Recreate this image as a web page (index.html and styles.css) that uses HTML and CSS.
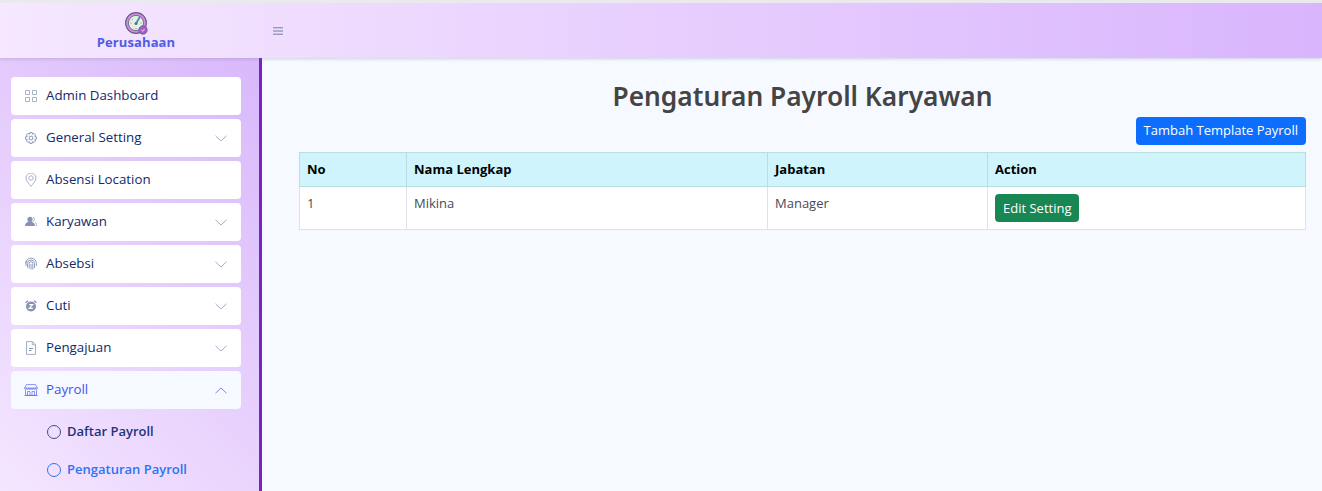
FILE: index.html
```html
<!DOCTYPE html>
<html lang="id">
<head>
<meta charset="utf-8">
<title>Pengaturan Payroll Karyawan</title>
<link rel="stylesheet" href="styles.css">
</head>
<body>
<header class="topbar">
  <div class="brand">
    <svg class="logo" viewBox="0 0 24 24" width="24" height="24">
      <circle cx="12" cy="12" r="10.4" fill="#d58ae0" stroke="#5c5f80" stroke-width="1.1"/>
      <circle cx="12" cy="12" r="7.6" fill="#e4efe6" stroke="#5c5f80" stroke-width=".8"/>
      <path d="M12 12.5 15.5 6.5" stroke="#3f8fb0" stroke-width="1.8" stroke-linecap="round"/>
      <circle cx="12" cy="12.5" r="1.5" fill="#5c6f80"/>
      <path d="M6.5 12h1M16.500 12h1M12 17v1M8 8l.7.7" stroke="#7a8a80" stroke-width="1"/>
      <circle cx="19" cy="19" r="4.200" fill="#a55fc9" stroke="#5c5f80" stroke-width=".8"/>
      <path d="M17.300 19l1.300 1.300 2-2.300" stroke="#f4e8fa" stroke-width=".9" fill="none"/>
    </svg>
    <span class="brand-name">Perusahaan</span>
  </div>
  <button class="burger" aria-label="Menu">
    <svg viewBox="0 0 10 8" width="10" height="8"><path d="M0 .8h10M0 4h10M0 7.200h10" stroke="#5f6f9f" stroke-width=".9"/></svg>
  </button>
</header>
<div class="shell">
  <aside class="sidebar">
    <a class="item">
      <svg class="ico" viewBox="0 0 12 12"><path d="M.5.500h4v4h-4zM7.500.500h4v4h-4zM.5 7.500h4v4h-4zM7.500 7.500h4v4h-4z" fill="none" stroke="#a9b3cc"/></svg>
      <span class="label">Admin Dashboard</span>
    </a>
    <a class="item">
      <svg class="ico" viewBox="0 0 12 12"><path d="M4.900.6h2.200l.4 1.600 1.500-.8 1.500 1.500-.8 1.500 1.700.5v2.200l-1.700.4.800 1.500-1.500 1.500-1.500-.8-.4 1.700H4.900l-.4-1.700-1.500.8-1.500-1.500.8-1.500L.6 7.100V4.900l1.700-.5-.8-1.500L3 1.400l1.500.8z" fill="none" stroke="#8693b5" stroke-width="1"/><circle cx="6" cy="6" r="1.900" fill="none" stroke="#8693b5"/></svg>
      <span class="label">General Setting</span>
      <svg class="chev" viewBox="0 0 12 7"><path d="M.5.800 6 6l5.500-5.200" fill="none" stroke="#a3aec9"/></svg>
    </a>
    <a class="item">
      <svg class="ico" viewBox="0 0 12 14"><path d="M6 13.400C4 10.500 1 7.800 1 5a5 5 0 0 1 10 0C11 7.800 8 10.500 6 13.400z" fill="none" stroke="#a9b3cc"/><circle cx="6" cy="5" r="2.200" fill="none" stroke="#a9b3cc"/></svg>
      <span class="label">Absensi Location</span>
    </a>
    <a class="item">
      <svg class="ico" viewBox="0 0 12 12"><circle cx="5" cy="3.400" r="2.600" fill="#8693b5"/><path d="M0 10c0-3 2.200-4.500 5-4.500S10 7 10 10z" fill="#8693b5"/><path d="M8 1.200a2.300 2.300 0 0 1 0 4.200M10 6c1 .7 1.500 2 1.500 4" fill="none" stroke="#a9b3cc"/></svg>
      <span class="label">Karyawan</span>
      <svg class="chev" viewBox="0 0 12 7"><path d="M.5.800 6 6l5.500-5.200" fill="none" stroke="#a3aec9"/></svg>
    </a>
    <a class="item">
      <svg class="ico" viewBox="0 0 12 12"><path d="M.6 5.500a5.400 5.400 0 0 1 10.800 0V8M1 8V5.500a5 5 0 0 1 1-3M2.500 9.500V5.500a3.500 3.500 0 0 1 7 0V10M4.200 10.500V5.500a1.800 1.800 0 0 1 3.600 0V11.500M6 6v5.500" fill="none" stroke="#8693b5" stroke-width=".9"/></svg>
      <span class="label">Absebsi</span>
      <svg class="chev" viewBox="0 0 12 7"><path d="M.5.800 6 6l5.500-5.200" fill="none" stroke="#a3aec9"/></svg>
    </a>
    <a class="item">
      <svg class="ico" viewBox="0 0 12 12"><circle cx="6" cy="6.500" r="5" fill="#8693b5"/><path d="M.6 2.800 3 .8M11.400 2.800 9 .8" stroke="#8693b5" stroke-width="1.400"/><path d="M4.200 4.600h3.600L4.200 8.400h3.600" fill="none" stroke="#fff" stroke-width="1.100"/></svg>
      <span class="label">Cuti</span>
      <svg class="chev" viewBox="0 0 12 7"><path d="M.5.800 6 6l5.500-5.200" fill="none" stroke="#a3aec9"/></svg>
    </a>
    <a class="item">
      <svg class="ico" viewBox="0 0 12 14"><path d="M1.500.6h6L10.500 3.600v9.800h-9zM7.300.6v3.200h3.200" fill="none" stroke="#a3aec9"/><path d="M4 7.500h4M4 9.500h2.500" stroke="#8693b5"/></svg>
      <span class="label">Pengajuan</span>
      <svg class="chev" viewBox="0 0 12 7"><path d="M.5.800 6 6l5.500-5.200" fill="none" stroke="#a3aec9"/></svg>
    </a>
    <a class="item item-open">
      <svg class="ico ico-wide" viewBox="0 0 14 12"><path d="M2.500.6h9L13.400 4H.6zM.6 4c0 2 2.100 2 2.100 0 0 2 2.200 2 2.200 0 0 2 2.100 2 2.100 0 0 2 2.200 2 2.200 0 0 2 2.100 2 2.100 0 0 2 2.100 2 2.100 0M1.500 6v5.400h11V6M.5 11.500h13M3.500 11V7.500h2.500V11M8 11V7.500h2.500V11" fill="none" stroke="#5a67f0" stroke-width=".7"/></svg>
      <span class="label">Payroll</span>
      <svg class="chev" viewBox="0 0 12 7"><path d="M.5 6.200 6 1l5.500 5.200" fill="none" stroke="#7a86ef"/></svg>
    </a>
    <a class="sub"><span class="dot"></span><span class="sub-label">Daftar Payroll</span></a>
    <a class="sub sub-active"><span class="dot"></span><span class="sub-label">Pengaturan Payroll</span></a>
  </aside>
  <main class="content">
    <h1 class="title">Pengaturan Payroll Karyawan</h1>
    <div class="actions"><button class="btn btn-primary"><span class="btn-text">Tambah Template Payroll</span></button></div>
    <table class="grid">
      <thead>
        <tr><th class="c-no">No</th><th class="c-name">Nama Lengkap</th><th class="c-job">Jabatan</th><th>Action</th></tr>
      </thead>
      <tbody>
        <tr><td>1</td><td>Mikina</td><td>Manager</td><td><button class="btn btn-success">Edit Setting</button></td></tr>
      </tbody>
    </table>
  </main>
</div>
</body>
</html>
```
FILE: styles.css
```css
* { box-sizing: border-box; }
html, body { margin: 0; height: 100%; overflow: hidden; }
body {
  font-family: "Open Sans", "Noto Sans", sans-serif;
  font-size: 13px;
  background: #f6f9ff;
  border-top: 3px solid #e9e9ee;
}
.topbar {
  height: 55px;
  display: flex;
  align-items: center;
  background: linear-gradient(90deg, #f6e8ff 0%, #d9b5fd 100%);
  box-shadow: 0 1px 3px rgba(120, 110, 150, .3);
  position: relative;
}
.brand {
  width: 272px;
  margin-right: 1px;
  display: flex;
  flex-direction: column;
  align-items: center;
}
.logo { display: block; }
.brand-name {
  font-size: 13px;
  font-weight: 700;
  line-height: 15px;
  letter-spacing: .1px;
  color: #4f5ce6;
}
.burger {
  border: 0;
  padding: 0;
  background: none;
  display: flex;
}
.shell { display: flex; height: 433px; }
.sidebar {
  width: 262px;
  flex: none;
  padding: 19px 18px 0 11px;
  border-right: 3px solid #7a22c4;
  background: linear-gradient(45deg, #f4e6ff 0%, #d9b8fb 100%);
  display: flex;
  flex-direction: column;
  gap: 4px;
  overflow: hidden;
}
.item {
  height: 38px;
  flex: none;
  display: flex;
  align-items: center;
  padding: 0 14px 2px 13px;
  background: #fff;
  border-radius: 4px;
  color: #12296b;
  font-size: 13.300px;
  font-weight: 520;
}
.ico { width: 12px; height: 14px; margin-right: 9px; flex: none; margin-left: 1px; margin-top: 2px; }
.ico-wide { width: 14px; margin-left: 0; margin-right: 8px; }
.label { flex: 1; }
.chev { width: 12px; height: 7px; margin-top: 2px; }
.item-open { background: #f6f9ff; color: #4154f1; }
.sub {
  height: 34px;
  flex: none;
  display: flex;
  align-items: center;
  padding-left: 36px;
  gap: 6px;
  color: #1f3478;
  font-size: 13px;
  font-weight: 600;
}
.sub-label { position: relative; top: -1px; }
.sub:nth-of-type(9) { margin-top: 2px; }
.dot {
  width: 14px;
  height: 14px;
  border: 1.300px solid #3e4f8a;
  border-radius: 50%;
}
.sub-active { color: #2a73f5; }
.sub-active .dot { border-color: #2a73f5; }
.content {
  flex: 1;
  padding: 19px 16px 0 37px;
  min-width: 0;
}
.title {
  margin: 0;
  text-align: center;
  font-size: 26.300px;
  line-height: 38px;
  font-weight: 600;
  color: #444;
  font-family: "Noto Sans", "Open Sans", sans-serif;
}
.actions {
  display: flex;
  justify-content: flex-end;
  margin: 2px 0 7px;
}
.btn {
  border: 0;
  border-radius: 4px;
  height: 28px;
  padding: 0 8px;
  color: #fff;
  font-family: "Open Sans", "Noto Sans", sans-serif;
  font-size: 13px;
  display: block;
}
.btn-text { position: relative; top: -1px; }
.btn-primary { background: #0d6efd; }
.btn-success { background: #198754; }
.grid {
  width: 100%;
  table-layout: fixed;
  border-collapse: collapse;
  background: #fff;
  color: #4a4a55;
}
.grid th, .grid td {
  border: 1px solid #dee2e6;
  padding: 7px;
  text-align: left;
  vertical-align: top;
  font-size: 13px;
  line-height: 19px;
}
.grid th {
  background: #cff4fc;
  border-color: #badce3;
  color: #000;
  font-weight: 700;
  height: 34px;
}
.grid td { height: 43px; }
.c-no { width: 107px; }
.c-name { width: 361px; }
.c-job { width: 220px; }
```
